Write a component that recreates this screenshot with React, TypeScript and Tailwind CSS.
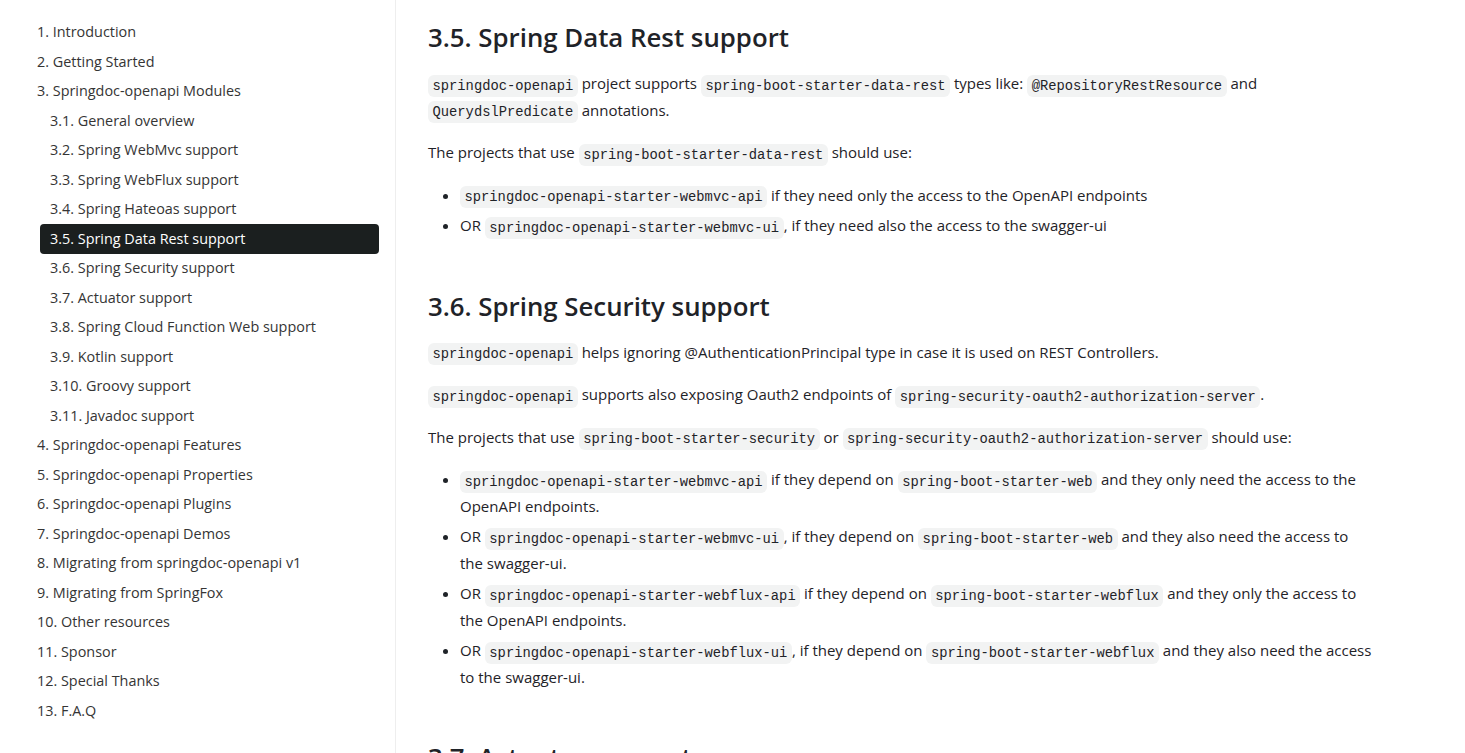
import React from "react";

const C = ({ children }: { children: React.ReactNode }) => (
  <code className="font-['Liberation_Mono',monospace] text-[13.8px] leading-[1] bg-[#f2f3f3] text-[#1f2328] rounded-[6px] px-[4.5px] py-[3.5px]">
    {children}
  </code>
);

type NavItem = { label: string; sub?: boolean; active?: boolean };

const nav: NavItem[] = [
  { label: "1. Introduction" },
  { label: "2. Getting Started" },
  { label: "3. Springdoc-openapi Modules" },
  { label: "3.1. General overview", sub: true },
  { label: "3.2. Spring WebMvc support", sub: true },
  { label: "3.3. Spring WebFlux support", sub: true },
  { label: "3.4. Spring Hateoas support", sub: true },
  { label: "3.5. Spring Data Rest support", sub: true, active: true },
  { label: "3.6. Spring Security support", sub: true },
  { label: "3.7. Actuator support", sub: true },
  { label: "3.8. Spring Cloud Function Web support", sub: true },
  { label: "3.9. Kotlin support", sub: true },
  { label: "3.10. Groovy support", sub: true },
  { label: "3.11. Javadoc support", sub: true },
  { label: "4. Springdoc-openapi Features" },
  { label: "5. Springdoc-openapi Properties" },
  { label: "6. Springdoc-openapi Plugins" },
  { label: "7. Springdoc-openapi Demos" },
  { label: "8. Migrating from springdoc-openapi v1" },
  { label: "9. Migrating from SpringFox" },
  { label: "10. Other resources" },
  { label: "11. Sponsor" },
  { label: "12. Special Thanks" },
  { label: "13. F.A.Q" },
];

function Sidebar() {
  return (
    <aside className="w-[396px] shrink-0 border-r border-[#eeeeee] pt-[17.5px] h-[753px]">
      <ul>
        {nav.map((n) => (
          <li
            key={n.label}
            className={
              n.active
                ? "h-[29.5px] flex items-center ml-[40px] w-[339px] pl-[10px] bg-[#1b1f1f] text-white rounded-[4px] text-[14.4px]"
                : n.sub
                ? "h-[29.5px] flex items-center ml-[40px] pl-[10px] text-[#353535] text-[14.4px]"
                : "h-[29.5px] flex items-center ml-[27px] pl-[10px] text-[#353535] text-[14.4px]"
            }
          >
            {n.label}
          </li>
        ))}
      </ul>
    </aside>
  );
}

const H2 = ({ children, first }: { children: React.ReactNode; first?: boolean }) => (
  <h2
    className={
      (first ? "mt-0 " : "mt-[50px] ") +
      "mb-[15px] text-[25.8px] leading-[35px] font-semibold text-[#1f2328] whitespace-nowrap"
    }
  >
    {children}
  </h2>
);

const P = ({ children }: { children: React.ReactNode }) => (
  <p className="mb-[16px] leading-[26.5px] whitespace-nowrap">{children}</p>
);

const LI = ({ children }: { children: React.ReactNode }) => (
  <li className="mt-[4px] first:mt-0 leading-[26.5px] whitespace-nowrap">{children}</li>
);

const UL = ({ children }: { children: React.ReactNode }) => (
  <ul className="list-disc list-outside pl-[32px] mb-[16px]">{children}</ul>
);

export default function App() {
  return (
    <div className="flex w-[1465px] h-[753px] overflow-hidden bg-white font-['Open_Sans',sans-serif] text-[15px] text-[#1f2328]">
      <Sidebar />
      <main className="pl-[32px] pt-[20px] w-[980px]">
        <H2 first>3.5. Spring Data Rest support</H2>
        <P>
          <C>springdoc-openapi</C> project supports <C>spring-boot-starter-data-rest</C> types like:{" "}
          <C>@RepositoryRestResource</C> and
          <br />
          <C>QuerydslPredicate</C> annotations.
        </P>
        <P>
          The projects that use <C>spring-boot-starter-data-rest</C> should use:
        </P>
        <UL>
          <LI>
            <C>springdoc-openapi-starter-webmvc-api</C> if they need only the access to the OpenAPI endpoints
          </LI>
          <LI>
            OR <C>springdoc-openapi-starter-webmvc-ui</C>, if they need also the access to the swagger-ui
          </LI>
        </UL>

        <H2>3.6. Spring Security support</H2>
        <P>
          <C>springdoc-openapi</C> helps ignoring @AuthenticationPrincipal type in case it is used on REST Controllers.
        </P>
        <P>
          <C>springdoc-openapi</C> supports also exposing Oauth2 endpoints of{" "}
          <C>spring-security-oauth2-authorization-server</C>.
        </P>
        <P>
          The projects that use <C>spring-boot-starter-security</C> or{" "}
          <C>spring-security-oauth2-authorization-server</C> should use:
        </P>
        <UL>
          <LI>
            <C>springdoc-openapi-starter-webmvc-api</C> if they depend on <C>spring-boot-starter-web</C> and they only
            need the access to the
            <br />
            OpenAPI endpoints.
          </LI>
          <LI>
            OR <C>springdoc-openapi-starter-webmvc-ui</C>, if they depend on <C>spring-boot-starter-web</C> and they
            also need the access to
            <br />
            the swagger-ui.
          </LI>
          <LI>
            OR <C>springdoc-openapi-starter-webflux-api</C> if they depend on <C>spring-boot-starter-webflux</C> and
            they only the access to
            <br />
            the OpenAPI endpoints.
          </LI>
          <LI>
            OR <C>springdoc-openapi-starter-webflux-ui</C>, if they depend on <C>spring-boot-starter-webflux</C> and
            they also need the access
            <br />
            to the swagger-ui.
          </LI>
        </UL>

        <H2>3.7. Actuator support</H2>
      </main>
    </div>
  );
}
